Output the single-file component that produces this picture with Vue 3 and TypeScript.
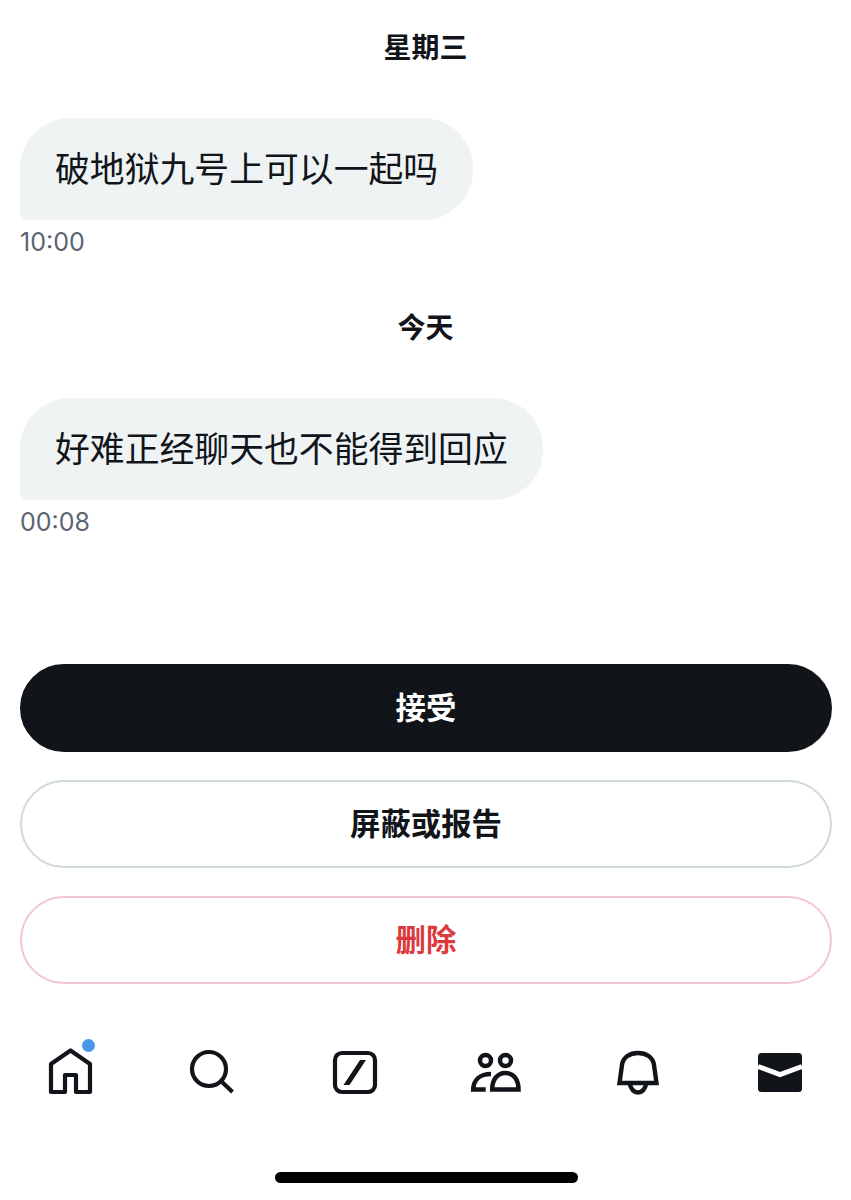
<script setup lang="ts">
interface Group {
  day: string
  text: string
  time: string
}

const groups: Group[] = [
  { day: '星期三', text: '破地狱九号上可以一起吗', time: '10:00' },
  { day: '今天', text: '好难正经聊天也不能得到回应', time: '00:08' },
]
</script>

<template>
  <div class="page">
    <main class="thread">
      <section v-for="g in groups" :key="g.day" class="group">
        <div class="day">{{ g.day }}</div>
        <div class="bubble">{{ g.text }}</div>
        <div class="time">{{ g.time }}</div>
      </section>
    </main>

    <div class="actions">
      <button class="btn primary">接受</button>
      <button class="btn outline">屏蔽或报告</button>
      <button class="btn danger">删除</button>
    </div>

    <nav class="nav">
      <div class="tab">
        <span class="icon-wrap">
          <svg class="icon" viewBox="0 0 50 50" fill="none" stroke="#11151a" stroke-width="4.2" stroke-linejoin="round">
            <path d="M19 45H5V17L24.5 3.5 44 17V45H30V28H19Z" />
          </svg>
          <span class="dot"></span>
        </span>
      </div>
      <div class="tab">
        <svg class="icon" viewBox="0 0 50 50" fill="none" stroke="#11151a" stroke-width="4.2">
          <circle cx="21" cy="22" r="17" />
          <path d="M33 34L44.5 45" />
        </svg>
      </div>
      <div class="tab">
        <svg class="icon" viewBox="0 0 50 50" fill="none">
          <rect x="5" y="6" width="40" height="39" rx="7" stroke="#11151a" stroke-width="4.2" />
          <path d="M30 13H36L19.5 38H13.5Z" fill="#11151a" />
        </svg>
      </div>
      <div class="tab">
        <svg class="icon" viewBox="0 0 50 50" fill="none" stroke="#11151a" stroke-width="4.5">
          <circle cx="14.5" cy="13.5" r="5.5" />
          <circle cx="34.5" cy="13.5" r="5.5" />
          <path d="M21.2 42.5C21.2 33 26 26 34.4 26S47.5 33 47.5 42.5Z" />
          <path d="M20 27C9 27 2.5 33 2.2 42.5H14.7" />
        </svg>
      </div>
      <div class="tab">
        <svg class="icon" viewBox="0 0 50 50" fill="none" stroke="#11151a" stroke-width="4.4">
          <path d="M6.5 36L9 18C10 10 17 6 25 6S40 10 41 18L43.5 36Z" />
          <path d="M16.5 36C18 42.5 21 45.5 25 45.5S32 42.5 33.5 36" />
        </svg>
      </div>
      <div class="tab">
        <svg class="icon" viewBox="0 0 50 50" fill="none">
          <rect x="3" y="6" width="44" height="39" rx="3.5" fill="#11151a" />
          <path d="M3 19.5L25 27.5 47 19.5" stroke="#fff" stroke-width="5" />
        </svg>
      </div>
    </nav>

    <div class="home-bar"></div>
  </div>
</template>

<style scoped>
.page {
  width: 851px;
  height: 1200px;
  background: #fff;
  overflow: hidden;
  color: #11151a;
  font-family: "Noto Sans CJK SC", "Liberation Sans", sans-serif;
  display: flex;
  flex-direction: column;
}

.thread {
  flex-shrink: 0;
  padding: 28px 20px 0;
  height: 664px;
  box-sizing: border-box;
}

.group {
  display: flex;
  flex-direction: column;
  align-items: flex-start;
  margin-bottom: 44px;
}

.day {
  align-self: center;
  height: 40px;
  line-height: 37px;
  font-size: 28px;
  font-weight: 600;
  margin-bottom: 50px;
}

.bubble {
  box-sizing: border-box;
  height: 102px;
  padding: 0 35px;
  line-height: 98px;
  font-size: 34.85px;
  background: #eff3f4;
  border-radius: 50px 50px 50px 6px;
  white-space: nowrap;
}

.time {
  height: 44px;
  line-height: 44px;
  font-family: Inter, "Liberation Sans", sans-serif;
  font-size: 25px;
  color: #5b6470;
}

.actions {
  flex-shrink: 0;
  display: flex;
  flex-direction: column;
  gap: 28px;
  padding: 0 19px 0 20px;
}

.btn {
  display: block;
  box-sizing: border-box;
  width: 100%;
  height: 88px;
  padding: 0 0 4px;
  border-radius: 44px;
  font-family: inherit;
  font-size: 30.4px;
  font-weight: 600;
  background: #fff;
  border: 2px solid #cfd9de;
  color: #11151a;
}

.primary {
  background: #11151a;
  border-color: #11151a;
  color: #fff;
}

.danger {
  border-color: #f4c6cf;
  color: #dc3a3f;
}

.nav {
  flex-shrink: 0;
  display: grid;
  grid-template-columns: repeat(6, 1fr);
  margin-top: 63px;
}

.tab {
  display: flex;
  justify-content: center;
}

.icon-wrap {
  position: relative;
  display: block;
  width: 50px;
  height: 50px;
}

.icon {
  display: block;
  width: 50px;
  height: 50px;
  overflow: visible;
}

.dot {
  position: absolute;
  left: 36px;
  top: -8px;
  width: 13px;
  height: 13px;
  border-radius: 50%;
  background: #4a99e9;
}

.home-bar {
  flex-shrink: 0;
  align-self: center;
  width: 303px;
  height: 11px;
  margin-top: 75px;
  margin-left: 1px;
  border-radius: 6px;
  background: #000;
}
</style>
